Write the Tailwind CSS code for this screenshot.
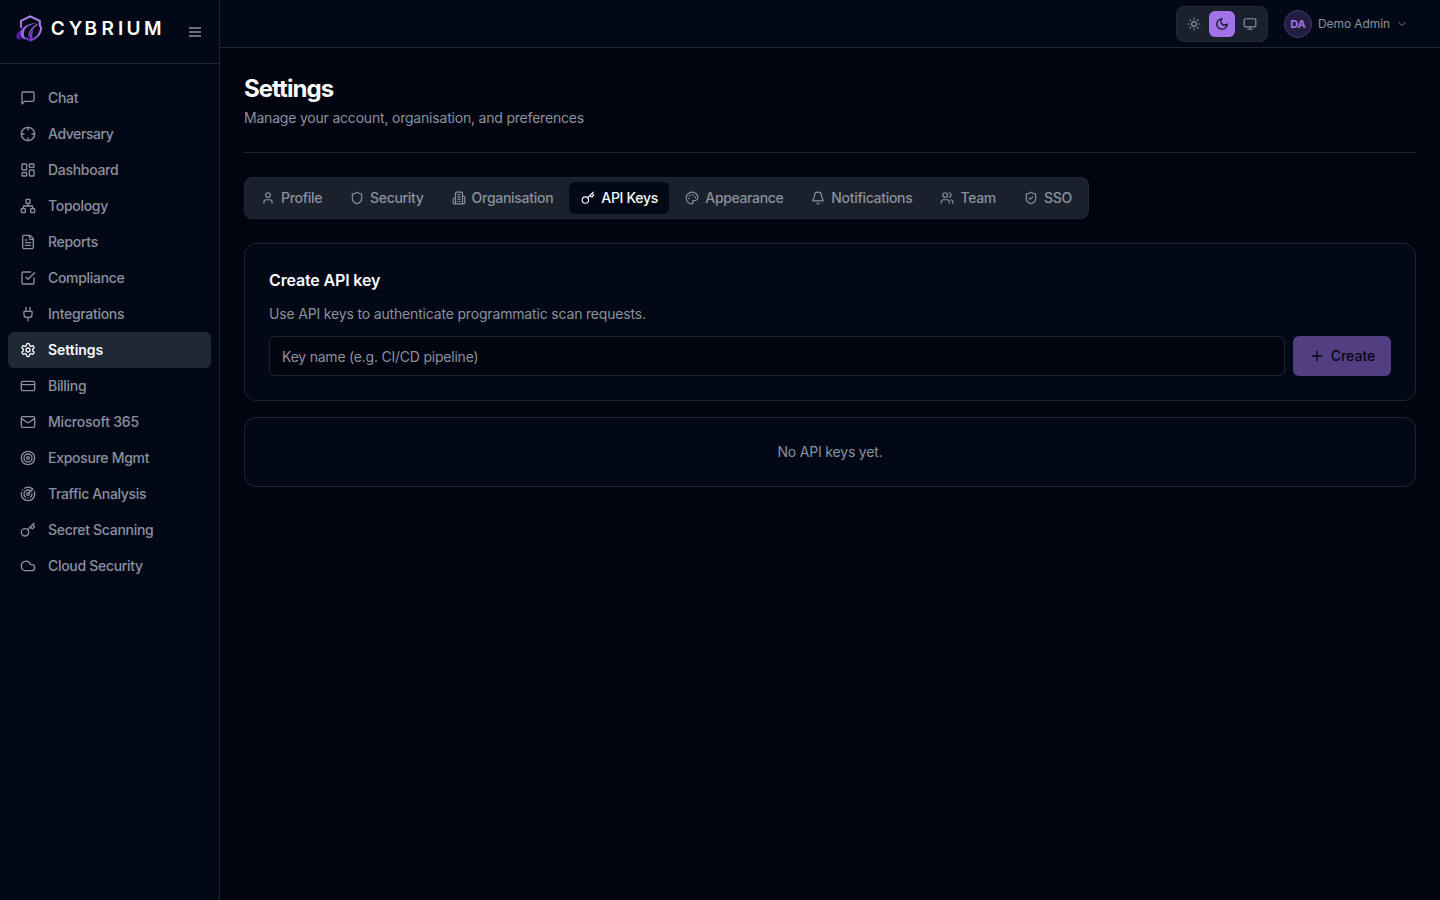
<!DOCTYPE html>
<html lang="en">
<head>
<meta charset="utf-8">
<title>Settings</title>
<script src="https://cdn.jsdelivr.net/npm/@tailwindcss/browser@4"></script>
</head>
<body class="bg-[#02050f] font-['Inter',sans-serif] text-sm tracking-[-0.19px] text-[#8a919e] antialiased">
<svg class="hidden">
  <defs>
    <symbol id="chat" viewBox="0 0 24 24"><path d="M21 15a2 2 0 0 1-2 2H7l-4 4V5a2 2 0 0 1 2-2h14a2 2 0 0 1 2 2z"/></symbol>
    <symbol id="crosshair" viewBox="0 0 24 24"><circle cx="12" cy="12" r="10"/><path d="M22 12h-4M6 12H2M12 6V2M12 22v-4"/></symbol>
    <symbol id="dashboard" viewBox="0 0 24 24"><rect width="7" height="9" x="3" y="3" rx="1"/><rect width="7" height="5" x="14" y="3" rx="1"/><rect width="7" height="9" x="14" y="12" rx="1"/><rect width="7" height="5" x="3" y="16" rx="1"/></symbol>
    <symbol id="network" viewBox="0 0 24 24"><rect x="16" y="16" width="6" height="6" rx="1"/><rect x="2" y="16" width="6" height="6" rx="1"/><rect x="9" y="2" width="6" height="6" rx="1"/><path d="M5 16v-3a1 1 0 0 1 1-1h12a1 1 0 0 1 1 1v3M12 12V8"/></symbol>
    <symbol id="file" viewBox="0 0 24 24"><path d="M15 2H6a2 2 0 0 0-2 2v16a2 2 0 0 0 2 2h12a2 2 0 0 0 2-2V7Z"/><path d="M14 2v4a2 2 0 0 0 2 2h4M10 9H8M16 13H8M16 17H8"/></symbol>
    <symbol id="check" viewBox="0 0 24 24"><path d="m9 11 3 3L22 4"/><path d="M21 12v7a2 2 0 0 1-2 2H5a2 2 0 0 1-2-2V5a2 2 0 0 1 2-2h11"/></symbol>
    <symbol id="plug" viewBox="0 0 24 24"><path d="M12 22v-5M9 8V2M15 8V2M18 8v5a4 4 0 0 1-4 4h-4a4 4 0 0 1-4-4V8Z"/></symbol>
    <symbol id="gear" viewBox="0 0 24 24"><path d="M12.22 2h-.44a2 2 0 0 0-2 2v.18a2 2 0 0 1-1 1.73l-.43.25a2 2 0 0 1-2 0l-.15-.08a2 2 0 0 0-2.73.73l-.22.38a2 2 0 0 0 .73 2.73l.15.1a2 2 0 0 1 1 1.72v.51a2 2 0 0 1-1 1.74l-.15.09a2 2 0 0 0-.73 2.73l.22.38a2 2 0 0 0 2.73.73l.15-.08a2 2 0 0 1 2 0l.43.25a2 2 0 0 1 1 1.73V20a2 2 0 0 0 2 2h.44a2 2 0 0 0 2-2v-.18a2 2 0 0 1 1-1.73l.43-.25a2 2 0 0 1 2 0l.15.08a2 2 0 0 0 2.73-.73l.22-.39a2 2 0 0 0-.73-2.73l-.15-.08a2 2 0 0 1-1-1.74v-.5a2 2 0 0 1 1-1.74l.15-.09a2 2 0 0 0 .73-2.73l-.22-.38a2 2 0 0 0-2.73-.73l-.15.08a2 2 0 0 1-2 0l-.43-.25a2 2 0 0 1-1-1.73V4a2 2 0 0 0-2-2z"/><circle cx="12" cy="12" r="3"/></symbol>
    <symbol id="card" viewBox="0 0 24 24"><rect width="20" height="14" x="2" y="5" rx="2"/><path d="M2 10h20"/></symbol>
    <symbol id="mail" viewBox="0 0 24 24"><rect width="20" height="16" x="2" y="4" rx="2"/><path d="m22 7-8.97 5.7a1.94 1.94 0 0 1-2.06 0L2 7"/></symbol>
    <symbol id="target" viewBox="0 0 24 24"><circle cx="12" cy="12" r="10"/><circle cx="12" cy="12" r="6"/><circle cx="12" cy="12" r="2"/></symbol>
    <symbol id="radar" viewBox="0 0 24 24"><path d="M19.07 4.93A10 10 0 0 0 6.99 3.34M4 6h.01M2.29 9.62A10 10 0 1 0 21.31 8.35M16.24 7.76A6 6 0 1 0 8.23 16.67M12 18h.01M17.99 11.66A6 6 0 0 1 15.77 16.67"/><circle cx="12" cy="12" r="2"/><path d="m13.41 10.59 5.66-5.66"/></symbol>
    <symbol id="key" viewBox="0 0 24 24"><path d="m15.5 7.5 2.3 2.3a1 1 0 0 0 1.4 0l2.1-2.1a1 1 0 0 0 0-1.4L19 4M21 2l-9.6 9.6"/><circle cx="7.5" cy="15.5" r="5.5"/></symbol>
    <symbol id="cloud" viewBox="0 0 24 24"><path d="M17.5 19H9a7 7 0 1 1 6.71-9h1.79a4.5 4.5 0 1 1 0 9Z"/></symbol>
    <symbol id="user" viewBox="0 0 24 24"><path d="M19 21v-2a4 4 0 0 0-4-4H9a4 4 0 0 0-4 4v2"/><circle cx="12" cy="7" r="4"/></symbol>
    <symbol id="shield" viewBox="0 0 24 24"><path d="M20 13c0 5-3.5 7.5-7.66 8.95a1 1 0 0 1-.67-.01C7.5 20.5 4 18 4 13V6a1 1 0 0 1 1-1c2 0 4.5-1.2 6.24-2.72a1.17 1.17 0 0 1 1.52 0C14.51 3.81 17 5 19 5a1 1 0 0 1 1 1z"/></symbol>
    <symbol id="building" viewBox="0 0 24 24"><path d="M6 22V4a2 2 0 0 1 2-2h8a2 2 0 0 1 2 2v18ZM6 12H4a2 2 0 0 0-2 2v6a2 2 0 0 0 2 2h2M18 9h2a2 2 0 0 1 2 2v9a2 2 0 0 1-2 2h-2M10 6h4M10 10h4M10 14h4M10 18h4"/></symbol>
    <symbol id="palette" viewBox="0 0 24 24"><g fill="currentColor"><circle cx="13.5" cy="6.5" r=".5"/><circle cx="17.5" cy="10.5" r=".5"/><circle cx="8.5" cy="7.5" r=".5"/><circle cx="6.5" cy="12.5" r=".5"/></g><path d="M12 2C6.5 2 2 6.5 2 12s4.5 10 10 10c.926 0 1.648-.746 1.648-1.688 0-.437-.18-.835-.437-1.125-.29-.289-.438-.652-.438-1.125a1.64 1.64 0 0 1 1.668-1.668h1.996c3.051 0 5.555-2.503 5.555-5.554C21.965 6.012 17.461 2 12 2z"/></symbol>
    <symbol id="bell" viewBox="0 0 24 24"><path d="M10.268 21a2 2 0 0 0 3.464 0M3.262 15.326A1 1 0 0 0 4 17h16a1 1 0 0 0 .74-1.673C19.41 13.956 18 12.499 18 8A6 6 0 0 0 6 8c0 4.499-1.411 5.956-2.738 7.326"/></symbol>
    <symbol id="users" viewBox="0 0 24 24"><path d="M16 21v-2a4 4 0 0 0-4-4H6a4 4 0 0 0-4 4v2"/><circle cx="9" cy="7" r="4"/><path d="M22 21v-2a4 4 0 0 0-3-3.87M16 3.13a4 4 0 0 1 0 7.75"/></symbol>
    <symbol id="sun" viewBox="0 0 24 24"><circle cx="12" cy="12" r="4"/><path d="M12 2v2M12 20v2M4.93 4.93l1.41 1.41M17.66 17.66l1.41 1.41M2 12h2M20 12h2M6.34 17.66l-1.41 1.41M19.07 4.93l-1.41 1.41"/></symbol>
    <symbol id="moon" viewBox="0 0 24 24"><path d="M12 3a6 6 0 0 0 9 9 9 9 0 1 1-9-9Z"/></symbol>
    <symbol id="monitor" viewBox="0 0 24 24"><rect width="20" height="14" x="2" y="3" rx="2"/><path d="M8 21h8M12 17v4"/></symbol>
  </defs>
</svg>
<div class="flex h-screen overflow-hidden">
  <aside class="flex w-[220px] shrink-0 flex-col border-r border-[#1f2733] bg-[#030817]">
    <div class="flex h-16 shrink-0 items-center justify-between border-b border-[#1f2733] pr-4 pl-4">
      <svg class="mb-[7px] h-7 w-[150px]" viewBox="0 0 150 28">
        <defs><linearGradient id="lg" gradientUnits="userSpaceOnUse" x1="20" y1="1" x2="10" y2="28"><stop offset="0" stop-color="#bd90f5"/><stop offset=".55" stop-color="#a06be6"/><stop offset="1" stop-color="#5a1fae"/></linearGradient></defs>
        <g fill="none" stroke="url(#lg)" stroke-linejoin="round">
          <path stroke-width="2" d="M5 14V6.800L14.200 2.300 23.800 6.800V11l1.300 3c0 5.500-4.100 9.800-10.600 12.800-1.700-.8-3.200-1.800-4.500-3"/>
          <path stroke-width="1.200" d="M12.500 22.500c.8-5 4-9.500 9-12.300"/>
        </g>
        <path fill="#9a60e6" d="M24 8.800C17 9.300 10 12 8.200 17.200c-.9 3 0 6 2.400 8.300C5.500 25.300 3.200 21.500 4.700 17.500 6.600 12.500 13.500 8.600 24 8.800Z"/>
        <path fill="#5a1cae" d="M5.300 15.500C1.500 17.500 0 20.500.3 23c.3 2 2.200 2.800 5.200 2.500C3 23 3.300 19 5.300 15.500Z"/>
        <path fill="#7a3bcf" d="M14.300 26.800c-1.500-4-.7-8.300 3.700-12.600-1.800 4.500-2.200 7.500-1.200 11.200Z"/>
        <text y="20.700" x="34.700 52.700 68.500 85.500 102 110.500 128" fill="#fff" class="font-['Inter',sans-serif] text-[19px] font-semibold">CYBRIUM</text>
      </svg>
      <svg class="h-4 w-4 fill-none stroke-current" viewBox="0 0 16 16" stroke-width="1.4"><path d="M2 4h12M2 8h12M2 12h12"/></svg>
    </div>
    <nav class="flex flex-col px-2 pt-4 font-medium tracking-[-0.3px] [&_a]:flex [&_a]:h-9 [&_a]:items-center [&_a]:gap-3 [&_a]:rounded-md [&_a]:px-3 [&_svg]:size-4 [&_svg]:fill-none [&_svg]:stroke-current [&_svg]:stroke-2 [&_svg]:[stroke-linecap:round] [&_svg]:[stroke-linejoin:round]">
      <a><svg><use href="#chat"/></svg>Chat</a>
      <a class="tracking-[-0.42px]"><svg><use href="#crosshair"/></svg>Adversary</a>
      <a><svg><use href="#dashboard"/></svg>Dashboard</a>
      <a><svg><use href="#network"/></svg>Topology</a>
      <a><svg><use href="#file"/></svg>Reports</a>
      <a><svg><use href="#check"/></svg>Compliance</a>
      <a><svg><use href="#plug"/></svg>Integrations</a>
      <a class="bg-[#1f2835] font-semibold tracking-[-0.05px] text-[#f8fafc]"><svg><use href="#gear"/></svg>Settings</a>
      <a><svg><use href="#card"/></svg>Billing</a>
      <a class="tracking-[-0.2px]"><svg><use href="#mail"/></svg>Microsoft 365</a>
      <a><svg><use href="#target"/></svg>Exposure Mgmt</a>
      <a class="tracking-[-0.35px]"><svg><use href="#radar"/></svg>Traffic Analysis</a>
      <a><svg><use href="#key"/></svg>Secret Scanning</a>
      <a><svg><use href="#cloud"/></svg>Cloud Security</a>
    </nav>
  </aside>
  <div class="flex min-w-0 flex-1 flex-col [&_svg]:size-3.5 [&_svg]:shrink-0 [&_svg]:fill-none [&_svg]:stroke-current [&_svg]:stroke-2 [&_svg]:[stroke-linecap:round] [&_svg]:[stroke-linejoin:round]">
    <header class="flex h-12 shrink-0 items-center justify-end gap-4 border-b border-[#1f2733] bg-[#030817] pr-[33px]">
      <div class="flex h-9 items-center gap-0.5 rounded-lg border border-[#1f2835] bg-[#1b212c] px-1 [&_span]:flex [&_span]:size-[26px] [&_span]:items-center [&_span]:justify-center [&_span]:rounded-md">
        <span><svg><use href="#sun"/></svg></span>
        <span class="bg-[#a173e8] text-[#030817]"><svg><use href="#moon"/></svg></span>
        <span><svg><use href="#monitor"/></svg></span>
      </div>
      <div class="flex items-center gap-1.5 text-xs tracking-[-0.08px]">
        <span class="flex size-7 items-center justify-center rounded-full border border-[#4a3776] bg-[#231d40] pt-px text-[11px] font-bold text-[#a173e8]">DA</span>
        <span class="w-[72px] whitespace-nowrap">Demo Admin</span>
        <svg class="ml-px size-2.5!" viewBox="0 0 24 24"><path d="m4 8 8 8 8-8"/></svg>
      </div>
    </header>
    <main class="p-6">
      <div class="border-b border-[#1f2733] pb-6">
        <h1 class="h-8 pt-px text-2xl leading-8 font-bold tracking-[-0.95px] text-[#f8fafc]">Settings</h1>
        <p class="mt-1 h-5 leading-5 tracking-[-0.2px]">Manage your account, organisation, and preferences</p>
      </div>
      <div class="mt-6 flex h-[42px] w-[845px] gap-1 rounded-lg border border-[#1f2835] bg-[#1b212c] p-1 font-medium tracking-[-0.31px] whitespace-nowrap [&_span]:flex [&_span]:shrink-0 [&_span]:items-center [&_span]:gap-1.5 [&_span]:rounded-md [&_span]:px-3">
        <span><svg><use href="#user"/></svg>Profile</span>
        <span><svg><use href="#shield"/></svg>Security</span>
        <span class="tracking-[-0.28px]"><svg><use href="#building"/></svg>Organisation</span>
        <span class="w-[100px] bg-[#030817] text-[#f8fafc]"><svg><use href="#key"/></svg>API Keys</span>
        <span class="tracking-[-0.36px]"><svg><use href="#palette"/></svg>Appearance</span>
        <span><svg><use href="#bell"/></svg>Notifications</span>
        <span><svg><use href="#users"/></svg>Team</span>
        <span><svg viewBox="0 0 24 24"><use href="#shield"/><path d="m9 12 2 2 4-4"/></svg>SSO</span>
      </div>
      <section class="mt-6 h-[158px] rounded-xl border border-[#1f2733] bg-[#030817] p-6">
        <h2 class="text-base leading-6 font-semibold tracking-[-0.15px] text-[#f8fafc]">Create API key</h2>
        <p class="mt-3 leading-5 tracking-[-0.17px]">Use API keys to authenticate programmatic scan requests.</p>
        <div class="mt-3 flex gap-2">
          <div class="flex h-10 flex-1 items-center rounded-md border border-[#1f2733] bg-[#02050f] px-3 pt-px tracking-[-0.22px]">Key name (e.g. CI/CD pipeline)</div>
          <button class="flex h-10 w-[98px] items-center justify-center gap-1.5 rounded-md bg-[#533e81] font-medium tracking-normal text-[#030712]"><svg class="size-4!" viewBox="0 0 24 24"><path d="M5 12h14M12 5v14"/></svg>Create</button>
        </div>
      </section>
      <section class="mt-4 flex h-[70px] items-center justify-center rounded-xl border border-[#1f2733] bg-[#030817]">No API keys yet.</section>
    </main>
  </div>
</div>
</body>
</html>
